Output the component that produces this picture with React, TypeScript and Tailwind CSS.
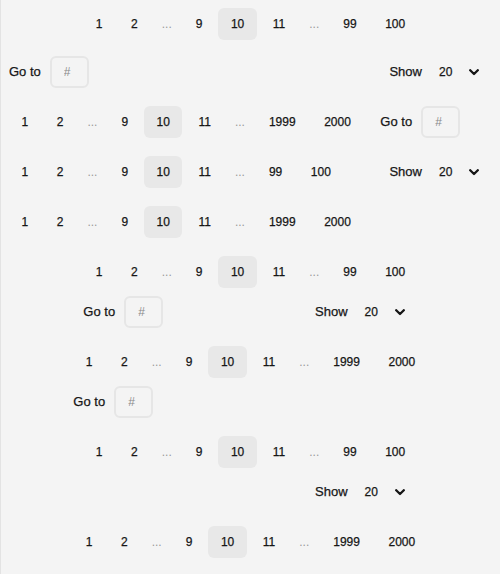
import React from 'react';

type Item = number | 'gap';

const SHORT: Item[] = [1, 2, 'gap', 9, 10, 11, 'gap', 99, 100];
const LONG: Item[] = [1, 2, 'gap', 9, 10, 11, 'gap', 1999, 2000];

const Pages: React.FC<{ items: Item[]; current?: number }> = ({ items, current = 10 }) => (
  <nav className="flex items-center gap-[3.5px]">
    {items.map((item, i) =>
      item === 'gap' ? (
        <span key={`gap-${i}`} className="h-8 px-2 flex items-center text-[12px] text-[#9a9a9a]">
          ...
        </span>
      ) : (
        <button
          key={item}
          className={
            item === current
              ? 'h-8 px-[12.5px] flex items-center rounded-md bg-[#e8e8e8] text-[12px] text-[#161616] [-webkit-text-stroke:0.25px_#161616]'
              : 'h-8 px-[12.5px] flex items-center rounded-md text-[12px] text-[#161616] [-webkit-text-stroke:0.25px_#161616]'
          }
        >
          {item}
        </button>
      )
    )}
  </nav>
);

const GoTo = () => (
  <div className="flex items-center gap-[9px]">
    <span className="text-[13px] text-[#161616] [-webkit-text-stroke:0.25px_#161616]">Go to</span>
    <input
      placeholder="#"
      className="w-[39px] h-8 pl-3 rounded-md border-2 border-[#e6e6e6] bg-transparent text-[12px] text-[#161616] placeholder:text-[#8a8a8a] outline-none"
    />
  </div>
);

const Show = () => (
  <div className="flex items-center">
    <span className="text-[13px] text-[#161616] [-webkit-text-stroke:0.25px_#161616]">Show</span>
    <div className="flex items-center h-8 pl-[17px] pr-[12.7px]">
      <span className="text-[12px] text-[#161616] [-webkit-text-stroke:0.25px_#161616]">20</span>
      <svg width="10" height="7" viewBox="0 0 10 7" className="ml-[17px]">
        <polyline points="1.2,1.2 5,5 8.8,1.2" fill="none" stroke="#161616" strokeWidth="2.3" strokeLinecap="round" strokeLinejoin="round" />
      </svg>
    </div>
  </div>
);

export default function App() {
  return (
    <div className="min-h-screen bg-[#f4f4f4] border-l border-[#e3e3e3] font-['Liberation_Sans',Arial,sans-serif] flex flex-col gap-[2px]">
      {/* full width: pages centered, controls split */}
      <div className="px-2 py-2 flex flex-col gap-4">
        <div className="flex justify-center">
          <Pages items={SHORT} />
        </div>
        <div className="flex items-center justify-between">
          <GoTo />
          <Show />
        </div>
      </div>

      {/* inline rows */}
      <div className="px-2 py-2 flex items-center">
        <Pages items={LONG} />
        <div className="ml-[17px]">
          <GoTo />
        </div>
      </div>
      <div className="px-2 py-2 flex items-center">
        <Pages items={SHORT} />
        <div className="ml-auto">
          <Show />
        </div>
      </div>
      <div className="px-2 py-2 flex items-center">
        <Pages items={LONG} />
      </div>

      {/* centered blocks */}
      <div className="px-2 py-2 flex justify-center">
        <div className="flex flex-col gap-2">
          <Pages items={SHORT} />
          <div className="flex items-center justify-between">
            <GoTo />
            <Show />
          </div>
        </div>
      </div>
      <div className="px-2 py-2 flex justify-center">
        <div className="flex flex-col gap-2">
          <Pages items={LONG} />
          <div className="flex items-center">
            <GoTo />
          </div>
        </div>
      </div>
      <div className="px-2 py-2 flex justify-center">
        <div className="flex flex-col gap-2">
          <Pages items={SHORT} />
          <div className="flex items-center justify-end">
            <Show />
          </div>
        </div>
      </div>
      <div className="px-2 py-2 flex justify-center">
        <Pages items={LONG} />
      </div>
    </div>
  );
}
